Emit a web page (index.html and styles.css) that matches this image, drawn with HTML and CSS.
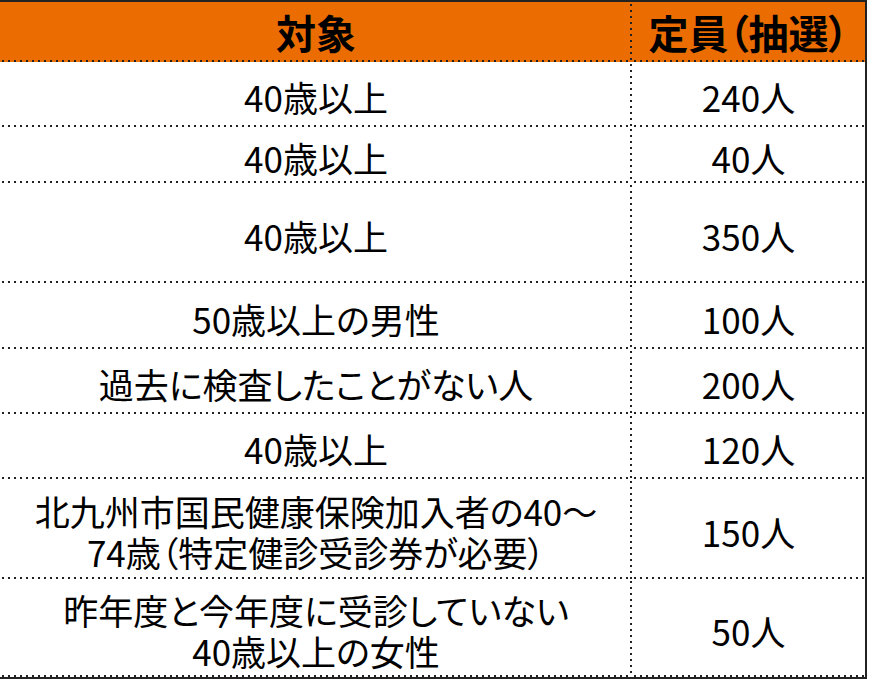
FILE: index.html
```html
<!DOCTYPE html>
<html lang="ja">
<head>
<meta charset="utf-8">
<link rel="stylesheet" href="styles.css">
</head>
<body>
<div class="table">
  <div class="row head h-head">
    <div class="cell left">対象</div>
    <div class="cell">定員（抽選）</div>
  </div>
  <div class="row h1">
    <div class="cell left">40歳以上</div>
    <div class="cell">240人</div>
  </div>
  <div class="row h2">
    <div class="cell left">40歳以上</div>
    <div class="cell">40人</div>
  </div>
  <div class="row h3">
    <div class="cell left">40歳以上</div>
    <div class="cell">350人</div>
  </div>
  <div class="row h4">
    <div class="cell left">50歳以上の男性</div>
    <div class="cell">100人</div>
  </div>
  <div class="row h5">
    <div class="cell left">過去に検査したことがない人</div>
    <div class="cell">200人</div>
  </div>
  <div class="row h6">
    <div class="cell left">40歳以上</div>
    <div class="cell">120人</div>
  </div>
  <div class="row h7">
    <div class="cell left">北九州市国民健康保険加入者の40～<br>74歳（特定健診受診券が必要）</div>
    <div class="cell">150人</div>
  </div>
  <div class="row h8">
    <div class="cell left">昨年度と今年度に受診していない<br>40歳以上の女性</div>
    <div class="cell">50人</div>
  </div>
</div>
</body>
</html>
```
FILE: styles.css
```css
html, body {
  margin: 0;
  padding: 0;
  background: #fff;
}
body {
  width: 870px;
  height: 679px;
  overflow: hidden;
  font-family: "Noto Sans CJK JP", "Noto Sans", sans-serif;
  color: #000;
}
.table {
  width: 865px;
  border-top: 2px solid #222;
  border-right: 2px solid #222;
  border-bottom: 2px solid #222;
}
.row {
  display: grid;
  grid-template-columns: 632px 233px;
}
.cell {
  display: flex;
  align-items: center;
  justify-content: center;
  text-align: center;
  font-size: 35px;
  line-height: 41px;
  padding-top: 4px;
  box-sizing: border-box;
  font-feature-settings: "palt";
  background-image: linear-gradient(to right, #222 2px, transparent 2px);
  background-size: 6px 2px;
  background-repeat: repeat-x;
  background-position: 2px bottom;
}
.cell.left {
  background-image:
    linear-gradient(to bottom, #222 2px, transparent 2px),
    linear-gradient(to right, #222 2px, transparent 2px);
  background-size: 2px 6px, 6px 2px;
  background-repeat: repeat-y, repeat-x;
  background-position: right 2px, 2px bottom;
}
.head .cell {
  background-color: #eb6c00;
  font-weight: bold;
  font-size: 40px;
  padding-top: 0;
}
.h-head { height: 60px; }
.h1 { height: 65px; }
.h2 { height: 56px; }
.h3 { height: 100px; }
.h4 { height: 66px; }
.h5 { height: 65px; }
.h6 { height: 65px; }
.h7 { height: 100px; }
.h8 { height: 98px; }
```
